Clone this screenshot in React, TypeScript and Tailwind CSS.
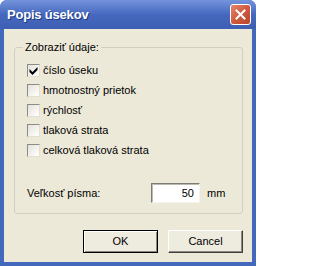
import { useState } from 'react'

const options = [
  { label: 'číslo úseku', checked: true },
  { label: 'hmotnostný prietok', checked: false },
  { label: 'rýchlosť', checked: false },
  { label: 'tlaková strata', checked: false },
  { label: 'celková tlaková strata', checked: false },
]

function CheckBox({ checked, onClick }: { checked: boolean; onClick: () => void }) {
  return (
    <button
      type="button"
      onClick={onClick}
      className="w-[13px] h-[13px] bg-gradient-to-br from-[#e4e2d8] to-white border border-t-[#8c8c86] border-l-[#8c8c86] border-b-[#e2e0d4] border-r-[#e2e0d4] flex items-center justify-center p-0"
    >
      {checked && (
        <svg width="9" height="9" viewBox="0 0 9 9">
          <path d="M0.5 3 L3.5 6 L8.5 1 L8.5 4 L3.5 9 L0.5 6 Z" fill="#000" />
        </svg>
      )}
    </button>
  )
}

export default function App() {
  const [values, setValues] = useState(options.map((o) => o.checked))
  const [size, setSize] = useState('50')

  const toggle = (i: number) => setValues((v) => v.map((x, j) => (j === i ? !x : x)))

  return (
    <div
      className="w-[256px] h-[266px] flex flex-col bg-[#4468bc] rounded-t-[7px] overflow-hidden text-[11px] text-black"
      style={{ fontFamily: '"Liberation Sans", Arial, sans-serif' }}
    >
      {/* Title bar */}
      <div className="h-[29px] shrink-0 flex items-center pl-[7px] pr-[5px] bg-gradient-to-b from-[#7593dc] via-[#4669bf] to-[#3c5fb3]">
        <span className="flex-1 text-white font-bold text-[13px] tracking-[-0.2px] [text-shadow:1px_1px_0_#1e3a80]">
          Popis úsekov
        </span>
        <button
          type="button"
          className="w-[21px] h-[21px] rounded-[3px] border border-white bg-gradient-to-br from-[#e2876c] via-[#d05a3e] to-[#b9452c] flex items-center justify-center"
        >
          <svg width="11" height="11" viewBox="0 0 11 11">
            <path d="M1.5 1.5 L9.5 9.5 M9.5 1.5 L1.5 9.5" stroke="#fff" strokeWidth="2" strokeLinecap="square" />
          </svg>
        </button>
      </div>

      {/* Body */}
      <div className="flex-1 mx-[4px] mb-[4px] bg-[#ece9d8] flex flex-col">
        <fieldset className="mt-[12px] ml-[10px] mr-[9px] border border-[#d0d0bf] rounded-[3px] pl-[12px] pr-[8px] pb-[10px]">
          <legend className="-ml-[4px] px-[2px] leading-[13px]">Zobraziť údaje:</legend>

          <div className="flex flex-col mt-[6px]">
            {options.map((o, i) => (
              <div key={o.label} className="h-[20px] flex items-center gap-[3px]">
                <CheckBox checked={values[i]} onClick={() => toggle(i)} />
                <span>{o.label}</span>
              </div>
            ))}
          </div>

          <div className="flex items-center mt-[23px]">
            <span className="w-[124px]">Veľkosť písma:</span>
            <input
              value={size}
              onChange={(e) => setSize(e.target.value)}
              className="w-[49px] h-[20px] bg-white text-right pr-[5px] border border-t-[#7d7d78] border-l-[#7d7d78] border-b-[#f4f3ee] border-r-[#f4f3ee] shadow-[inset_1px_1px_0_#bdbab0] outline-none text-[11px]"
            />
            <span className="ml-[7px]">mm</span>
          </div>
        </fieldset>

        <div className="flex justify-end gap-[10px] mt-[16px] mr-[9px]">
          <button
            type="button"
            className="w-[75px] h-[23px] border border-black bg-[#eeebdf] shadow-[inset_1px_1px_0_#fff,inset_-1px_-1px_0_#8a887e]"
          >
            OK
          </button>
          <button
            type="button"
            className="w-[75px] h-[23px] border border-t-white border-l-white border-b-[#404040] border-r-[#404040] bg-[#eeebdf] shadow-[inset_-1px_-1px_0_#8a887e]"
          >
            Cancel
          </button>
        </div>
      </div>
    </div>
  )
}
